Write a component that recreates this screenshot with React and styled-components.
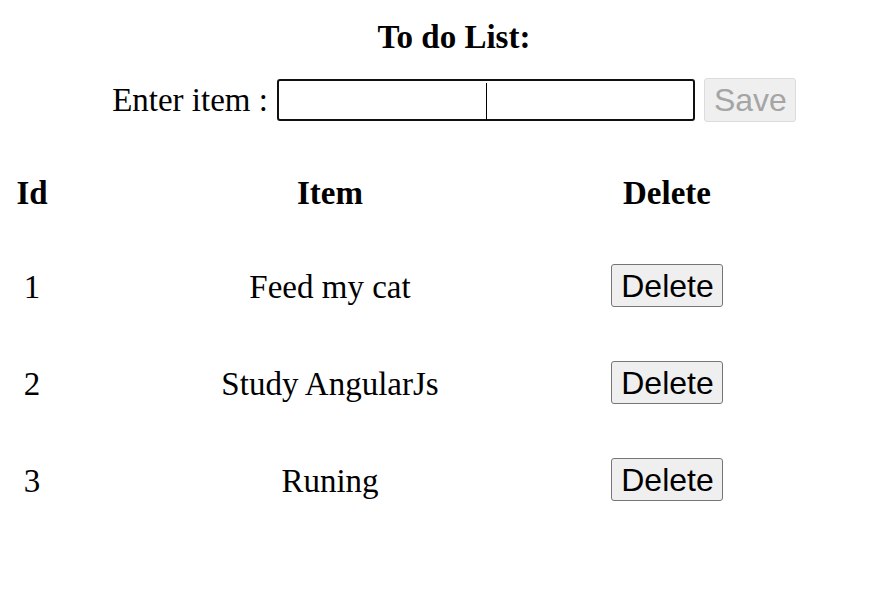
import React from "react";
import styled, { createGlobalStyle } from "styled-components";

const Global = createGlobalStyle`
  html, body { margin: 0; padding: 0; background: #fff; }
  body { font-family: "Liberation Serif", "Times New Roman", serif; color: #000; }
`;

const Page = styled.div`
  width: 896px;
  padding-top: 19px;
`;

const Header = styled.div`
  padding-left: 12px;
  display: flex;
  flex-direction: column;
  align-items: center;
`;

const Title = styled.h1`
  margin: 0;
  font-size: 33px;
  font-weight: bold;
  line-height: 37px;
`;

const Form = styled.div`
  margin-top: 22px;
  display: flex;
  align-items: center;
  gap: 9px;
  height: 44px;
`;

const Label = styled.span`
  font-size: 33px;
  line-height: 37px;
  padding-top: 1px;
`;

const InputWrap = styled.div`
  position: relative;
  &::after {
    content: "";
    position: absolute;
    left: 209px;
    top: 4px;
    width: 1px;
    height: 37px;
    background: #000;
  }
`;

const Input = styled.input`
  box-sizing: border-box;
  width: 418px;
  height: 42px;
  border: 2px solid #101010;
  border-radius: 3px;
  outline: none;
  padding: 0 4px;
  font-size: 24px;
  font-family: "Liberation Sans", Arial, sans-serif;
  caret-color: transparent;
  display: block;
`;

const Button = styled.button`
  box-sizing: border-box;
  height: ${(p) => p.$h}px;
  padding: 0 8px 0 9px;
  font-family: "Liberation Sans", Arial, sans-serif;
  font-size: 32px;
  line-height: 1;
  background: #efefef;
  color: ${(p) => (p.disabled ? "#a5a5a5" : "#000")};
  border: 1px solid ${(p) => (p.disabled ? "#dcdcdc" : "#767676")};
  border-radius: 3px;
`;

const Table = styled.div`
  margin-top: 53px;
  display: grid;
  grid-template-columns: 64px 532px 142px;
  row-gap: 54px;
  align-items: center;
`;

const HeadCell = styled.div`
  font-size: 33px;
  font-weight: bold;
  line-height: 37px;
  text-align: center;
  margin-bottom: -2px;
`;

const Cell = styled.div`
  font-size: 33px;
  line-height: 37px;
  height: 43px;
  box-sizing: border-box;
  padding-top: ${(p) => (p.$text ? 3 : 0)}px;
  display: flex;
  align-items: center;
  justify-content: center;
`;

const items = [
  { id: 1, text: "Feed my cat" },
  { id: 2, text: "Study AngularJs" },
  { id: 3, text: "Runing" },
];

export default function App() {
  return (
    <>
      <Global />
      <Page>
        <Header>
          <Title>To do List:</Title>
          <Form>
            <Label>Enter item :</Label>
            <InputWrap>
              <Input type="text" />
            </InputWrap>
            <Button $h={44} disabled>Save</Button>
          </Form>
        </Header>
        <Table>
          <HeadCell>Id</HeadCell>
          <HeadCell>Item</HeadCell>
          <HeadCell>Delete</HeadCell>
          {items.map((it) => (
            <React.Fragment key={it.id}>
              <Cell $text>{it.id}</Cell>
              <Cell $text>{it.text}</Cell>
              <Cell>
                <Button $h={43}>Delete</Button>
              </Cell>
            </React.Fragment>
          ))}
        </Table>
      </Page>
    </>
  );
}
